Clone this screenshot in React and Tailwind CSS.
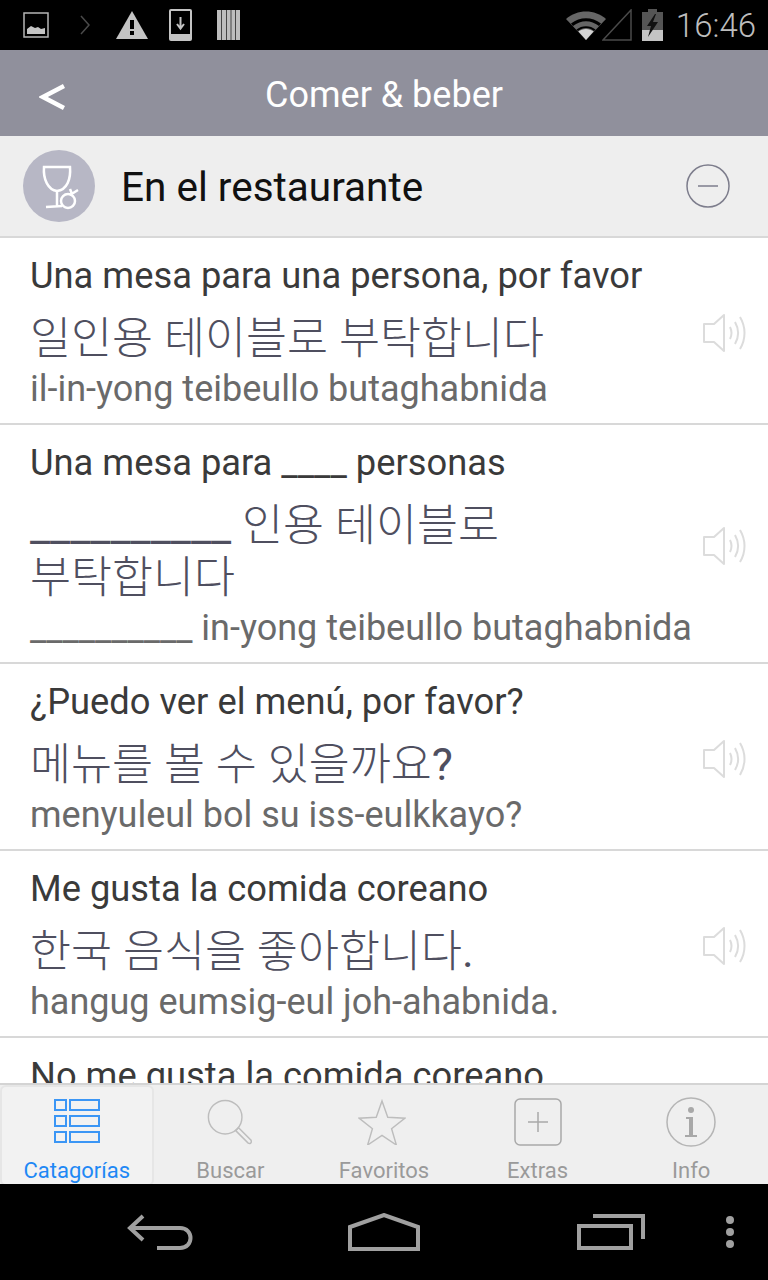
const phrases = [
  { es: 'Una mesa para una persona, por favor', ko: '일인용 테이블로 부탁합니다', rom: 'il-in-yong teibeullo butaghabnida' },
  { es: 'Una mesa para ____ personas', ko: '__________ 인용 테이블로 부탁합니다', rom: '__________ in-yong teibeullo butaghabnida' },
  { es: '¿Puedo ver el menú, por favor?', ko: '메뉴를 볼 수 있을까요?', rom: 'menyuleul bol su iss-eulkkayo?' },
  { es: 'Me gusta la comida coreano', ko: '한국 음식을 좋아합니다.', rom: 'hangug eumsig-eul joh-ahabnida.' },
  { es: 'No me gusta la comida coreano', ko: '한국 음식을 좋아하지 않습니다.', rom: 'hangug eumsig-eul joh-ahaji anhseubnida.' },
];

function Speaker() {
  return (
    <svg width="44" height="40" viewBox="0 0 44 40" fill="none" stroke="#dcdcdc" strokeWidth="2" className="shrink-0">
      <path d="M2 11h10L22 2v36L12 29H2z" strokeLinejoin="round" />
      <path d="M28 14c2 4 2 8 0 12" />
      <path d="M33 9c4 7 4 15 0 22" />
      <path d="M38 4c6 10 6 22 0 32" />
    </svg>
  );
}

function StatusBar() {
  return (
    <div className="h-[50px] bg-black flex items-center shrink-0 pl-[23px] pr-[12px]">
      <svg width="26" height="26" viewBox="0 0 26 26" fill="none">
        <rect x="1" y="1" width="24" height="24" stroke="#b5b5b5" strokeWidth="1.5" />
        <path d="M4 22v-5l4-3 4 2 3-1 3 2 4-1v6z" fill="#c4c4c4" />
      </svg>
      <svg width="10" height="20" viewBox="0 0 10 20" fill="none" className="ml-[31px]">
        <path d="M1 1l8 9-8 9" stroke="#4a4a4a" strokeWidth="1.5" />
      </svg>
      <svg width="32" height="28" viewBox="0 0 32 28" className="ml-[26px]">
        <path d="M16 0L32 28H0z" fill="#c4c4c4" />
        <rect x="14" y="9" width="4" height="9" fill="#000" />
        <rect x="14" y="20" width="4" height="4" fill="#000" />
      </svg>
      <svg width="23" height="32" viewBox="0 0 23 32" className="ml-[21px]">
        <rect width="23" height="32" rx="2" fill="#c4c4c4" />
        <rect x="2" y="2" width="19" height="23" fill="#000" />
        <path d="M11.5 8v11M8 15l3.5 4.5L15 15" stroke="#c4c4c4" strokeWidth="2" fill="none" />
      </svg>
      <svg width="23" height="30" viewBox="0 0 23 30" className="ml-[25px]">
        <rect width="23" height="30" fill="#bdbdbd" />
        <path d="M4.5 0v30M9.5 0v30M14 0v30M18.5 0v30" stroke="#444" strokeWidth="1" />
      </svg>
      <svg width="40" height="30" viewBox="0 0 40 30" className="ml-auto">
        <path d="M0 9C11-1 29-1 40 9L20 30z" fill="#666" />
        <path d="M5 13.5c9-7 21-7 30 0l-2 2.5c-8-6.500-18-6.500-26 0z" fill="#000" />
        <path d="M10.500 19.500c5-4.500 14-4.500 19 0l-1.500 1.500c-5-4-11-4-16 0z" fill="#000" />
        <path d="M12.500 21.500c4-3.500 11-3.500 15 0L20 30z" fill="#d4d4d4" />
      </svg>
      <svg width="30" height="32" viewBox="0 0 30 32" fill="none" className="ml-[-4px]">
        <path d="M1 31L29 1v30z" stroke="#4a4a4a" strokeWidth="1.5" />
      </svg>
      <svg width="21" height="32" viewBox="0 0 21 32" className="ml-[10px]">
        <rect x="6" y="0" width="9" height="3" fill="#555" />
        <rect x="0" y="3" width="21" height="18" fill="#555" />
        <rect x="0" y="21" width="21" height="11" fill="#c4c4c4" />
        <path d="M13 5L5 17h4l-3 11 10-15h-5l3-8z" fill="#111" />
      </svg>
      <span className="ml-[13px] text-[33px] font-light text-[#bdbdbd] leading-none">16:46</span>
    </div>
  );
}

// latin bits of the korean line use regular weight, hangul stays light
function KoreanText({ text }) {
  return text.split(/([_?.]+)/).map((part, i) =>
    i % 2 ? <span key={i} className="font-normal">{part}</span> : part
  );
}

function PhraseRow({ item }) {
  return (
    <div className="border-b-2 border-[#d8d8d8] flex items-center pl-[30px] pr-[22px] pt-[13px] pb-[9px]">
      <div className="flex-1 min-w-0 pr-[14px]">
        <div className="text-[36.3px] leading-[50px] text-[#3a3a3a] whitespace-nowrap">{item.es}</div>
        <div className="text-[44.6px] leading-[52px] font-light text-[#4f4f5f] mt-[12px] break-keep [font-family:'Roboto','Noto_Sans_CJK_KR',sans-serif]">
          <KoreanText text={item.ko} />
        </div>
        <div className="text-[36px] leading-[50px] text-[#6a6a6a] mt-[-1px] whitespace-nowrap">{item.rom}</div>
      </div>
      <Speaker />
    </div>
  );
}

function Tab({ label, active, children }) {
  return (
    <div className={`flex flex-col items-center h-full relative ${active ? 'bg-[#f2f2f2] border-2 border-[#e6e6e6] rounded-md' : ''}`}>
      <div className={`h-[66px] flex items-center justify-center ${active ? 'mt-[2px]' : 'mt-[4px]'}`}>{children}</div>
      <span className={`text-[22px] leading-[26px] mt-[3px] ${active ? 'text-[#1e88f5]' : 'text-[#9a9a9a]'}`}>{label}</span>
    </div>
  );
}

export default function App() {
  return (
    <div className="w-[768px] h-[1280px] flex flex-col overflow-hidden bg-white font-['Roboto',sans-serif]">
      <StatusBar />

      <div className="h-[86px] bg-[#90909c] flex items-center justify-center relative shrink-0">
        <svg width="26" height="28" viewBox="0 0 26 28" fill="none" className="absolute left-[39px] top-[33px]">
          <path d="M25 3L4 14l21 11" stroke="#fff" strokeWidth="4.500" />
        </svg>
        <span className="text-[36px] text-white pt-[3px]">Comer &amp; beber</span>
      </div>

      <div className="h-[102px] bg-[#eeeeee] border-b-2 border-[#d8d8d8] flex items-center pl-[23px] pr-[38px] shrink-0">
        <div className="w-[72px] h-[72px] rounded-full bg-[#b7b7c5]">
          <svg width="72" height="72" viewBox="0 0 72 72" fill="none" stroke="#fff" strokeWidth="2.500">
            <path d="M21 17h26c1 12-3 23-13 24C25 40 20 29 21 17z" />
            <path d="M34 41v15M23 57l16-1" />
            <circle cx="45" cy="51" r="7" />
            <path d="M47 45l8-5M47 39l2 5" />
          </svg>
        </div>
        <span className="ml-[26px] text-[40.5px] text-[#111] flex-1 pt-[2px]">En el restaurante</span>
        <svg width="44" height="44" viewBox="0 0 44 44" fill="none">
          <circle cx="22" cy="22" r="21" stroke="#7d7d8c" strokeWidth="1.500" />
          <path d="M12 22h20" stroke="#7d7d8c" strokeWidth="1.500" />
        </svg>
      </div>

      <div className="flex-1 min-h-0 overflow-hidden">
        {phrases.map((item, i) => (
          <PhraseRow key={i} item={item} />
        ))}
      </div>

      <div className="h-[101px] bg-[#efefef] border-t-2 border-[#d4d4d4] grid grid-cols-5 shrink-0">
        <Tab label="Catagorías" active>
          <svg width="46" height="46" viewBox="0 0 46 46" fill="none" stroke="#3b96f5" strokeWidth="2">
            <rect x="1" y="1" width="11" height="10" />
            <rect x="16" y="1" width="29" height="10" />
            <rect x="1" y="17" width="11" height="10" />
            <rect x="16" y="17" width="29" height="10" />
            <rect x="1" y="33" width="11" height="10" />
            <rect x="16" y="33" width="29" height="10" />
          </svg>
        </Tab>
        <Tab label="Buscar">
          <svg width="46" height="46" viewBox="0 0 48 48" fill="none" stroke="#bdbdbd" strokeWidth="1.500" className="mr-[3px]">
            <circle cx="20" cy="19" r="17.500" />
            <path d="M31 33l3-3 13 13c1 3-1 4-3 3z" />
          </svg>
        </Tab>
        <Tab label="Favoritos">
          <svg width="48" height="46" viewBox="0 0 50 48" fill="none" stroke="#bdbdbd" strokeWidth="1.500" className="mr-[3px]">
            <path d="M25 2l6 17 18 1-14 11 5 17-15-10-15 10 5-17L1 20l18-1z" />
          </svg>
        </Tab>
        <Tab label="Extras">
          <svg width="48" height="48" viewBox="0 0 48 48" fill="none" stroke="#a9a9a9" strokeWidth="1.500">
            <rect x="1" y="1" width="46" height="46" rx="5" />
            <path d="M24 14v20M14 24h20" />
          </svg>
        </Tab>
        <Tab label="Info">
          <svg width="50" height="50" viewBox="0 0 50 50" fill="none">
            <circle cx="25" cy="25" r="24" stroke="#b5b5b5" strokeWidth="1.500" />
            <circle cx="25" cy="13" r="3" fill="#a8a8a8" />
            <path d="M20 20h7v18h4v2H19v-2h4V22h-3z" fill="#a8a8a8" />
          </svg>
        </Tab>
      </div>

      <div className="h-[96px] bg-black flex items-center shrink-0 relative pl-[127px]">
        <svg width="66" height="36" viewBox="0 0 66 36" fill="none" stroke="#a0a0a0" strokeWidth="4">
          <path d="M16 2L3 14l13 12" />
          <path d="M3 14h50c14 0 14 20 0 20H30" />
        </svg>
        <svg width="72" height="38" viewBox="0 0 72 38" fill="none" stroke="#a0a0a0" strokeWidth="4" className="ml-[155px]">
          <path d="M2 36V14L36 2l34 12v22z" />
        </svg>
        <svg width="68" height="36" viewBox="0 0 68 36" fill="none" stroke="#a0a0a0" strokeWidth="4" className="ml-[157px]">
          <rect x="2" y="12" width="52" height="22" />
          <path d="M16 2h50v23" />
        </svg>
        <svg width="10" height="34" viewBox="0 0 10 34" fill="#a0a0a0" className="ml-[80px]">
          <circle cx="5" cy="5" r="4" />
          <circle cx="5" cy="17" r="4" />
          <circle cx="5" cy="29" r="4" />
        </svg>
      </div>
    </div>
  );
}
